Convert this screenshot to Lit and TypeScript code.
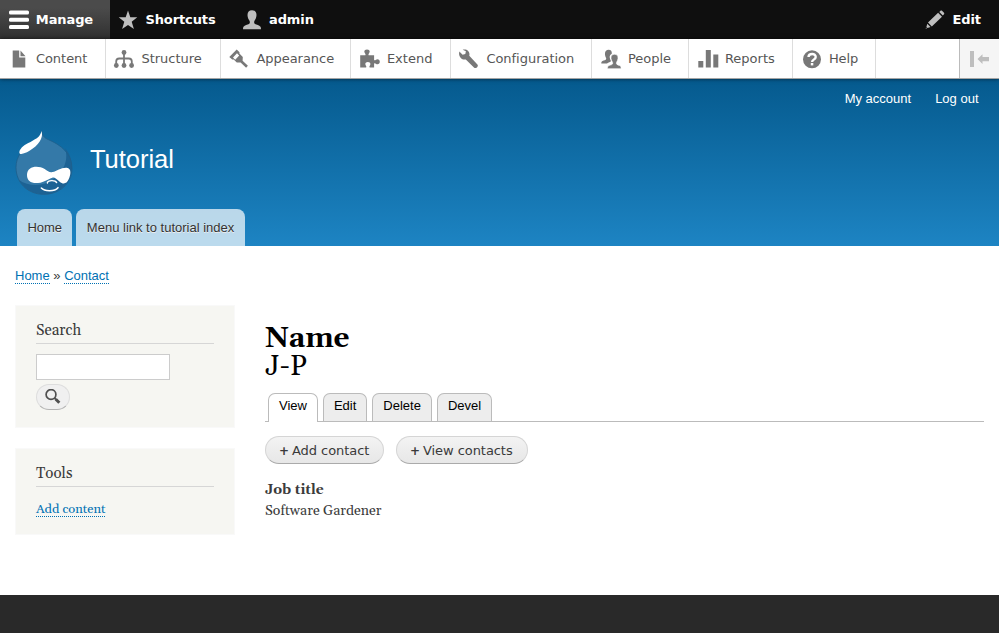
import { LitElement, html, css, svg } from "lit";
import { customElement } from "lit/decorators.js";

const icons: Record<string, unknown> = {
  menu: svg`<rect y="0.4" width="20" height="4.1" rx="1.5"/><rect y="7.7" width="20" height="4.1" rx="1.5"/><rect y="15" width="20" height="4.1" rx="1.5"/>`,
  star: svg`<path d="M10 .5l2.300 6.700h7l-5.600 4.500 2.200 7.200L10 14.900l-5.900 4 2.200-7.200L.7 7.200h7z"/>`,
  user: svg`<path d="M10 .2c3 0 4.500 2 4.500 4.800 0 2.200-.9 4.300-2 5.800-.6 1-.5 2.600.5 3.200 1.500.9 4.300 1.100 5.500 2.700.4.6.5 1.800.5 2.500H1c0-.7.100-1.900.5-2.500C2.700 15.100 5.500 14.900 7 14c1-.6 1.100-2.200.5-3.200-1.100-1.500-2-3.600-2-5.800C5.500 2.200 7 .2 10 .2z"/>`,
  pencil: svg`<path d="M13.100 2.800l3.900 3.900L6.800 16.500 3 12.600zM14.300 1.900l1.200-1.100c.5-.4 1-.4 1.500 0L19 2.800c.4.500.4 1 0 1.500l-1.200 1.200zM2.300 13.800l3.200 3.300-3 .9-1.100-1zM1 17.400l.9 1L.7 18.800z"/>`,
  content: svg`<path d="M3.700 1.500h6.500v7h6.100v10H3.700zM11.500 1.500l5 5.700h-5z"/>`,
  structure: svg`<g fill="none" stroke="#787878" stroke-width="1.8"><path d="M10 3v13M2.200 16v-3.500c0-2 1-3 3-3h9.600c2 0 3 1 3 3V16"/></g><circle cx="10" cy="3.500" r="2.400"/><circle cx="2.300" cy="16.500" r="2.400"/><circle cx="10" cy="16.500" r="2.400"/><circle cx="17.600" cy="16.500" r="2.400"/>`,
  appearance: svg`<path fill-rule="evenodd" d="M.3 8.100L7.700.5l2.800 2.700-.1 1.400 3.400 3.500-.2 3.700 5.300 4.900-1.800 2-5.500-5.300-3.800.2-3.100-3.100-1.500.1zM4 8.500l2.200 2.300 4-4.200L8 4.200z"/>`,
  extend: svg`<path d="M.2 6.200H5.400C6.200 5 4.200 4.200 4.300 2.600 4.400 1.200 5.400.5 7 .5s2.700.8 2.700 2.100C9.700 4.200 8 5 8.600 6.200h5.500v4.800c1 1 1.900-.8 3.400-.8 1.400 0 2.300 1 2.300 2.500s-.9 2.500-2.300 2.500c-1.500 0-2.500-1.700-3.400-.8v4H9.700c-1.100-1 .7-2.100.7-3.500 0-1.300-1-2-2.500-2s-2.600.8-2.600 2c0 1.500 1.800 2.500.8 3.500H.2z"/>`,
  config: svg`<path d="M.4 2.600l3.200 3.100 2.700-.6.600-2.800L3.700.8C5.500.1 7.700.4 9.100 1.900c1.300 1.300 1.700 3 1.200 4.800l8.100 8.700c1.600 1.700-1.500 4.800-3.200 3.300L6.800 10.400c-1.800.5-3.700 0-5-1.400C.2 7.400-.4 4.700.4 2.600z"/>`,
  people: svg`<path d="M7.500.7c2.500 0 3.500 1.600 3.300 4-1.500.8-2.200 2.100-2.100 3.600.1 1.500.8 2.800 1.300 3.800-.2 1.500-2.800 1.200-4 2.300H.3c0-1.300.2-2 1.200-2.500 1.500-.7 3.500-.6 3.700-2.200.1-1-.4-1.300-.8-2.300-.4-1-.6-2-.4-3.300.2-2 1.500-3.400 3.500-3.400z"/><path stroke="#fff" stroke-width=".6" d="M13.500 5.300c2.500 0 3.700 1.600 3.500 4-.1 1.700-.9 3-1.500 4.100-.7 2.200 1.500 2.500 3.200 3.100 1 .4 1.400 1.400 1.400 3.200H6.500c0-1.900.4-2.800 1.500-3.200 1.700-.6 4.400-.8 3.600-3-.5-1.200-1.500-2.400-1.600-4.200-.1-2.500 1-4 3.500-4z"/>`,
  reports: svg`<rect x=".3" y="12" width="5" height="6.500"/><rect x="7.800" y="1" width="5" height="17.500"/><rect x="15.300" y="5.500" width="5" height="13"/>`,
  help: svg`<circle cx="10" cy="10.300" r="9"/><path d="M6.500 8c.2-4 7.300-4 7.200-.1 0 2.700-3.600 2.700-3.600 5" fill="none" stroke="#fff" stroke-width="2.400"/><rect x="8.800" y="14" width="2.500" height="2.400" fill="#fff"/>`,
};
const icon = (name: string) => html`<svg class="icon" viewBox="0 0 20 20">${icons[name]}</svg>`;

const tray = [
  ["content", "Content"], ["structure", "Structure"], ["appearance", "Appearance"], ["extend", "Extend"],
  ["config", "Configuration"], ["people", "People"], ["reports", "Reports"], ["help", "Help"],
];

@customElement("app-root")
export class AppRoot extends LitElement {
  static styles = css`
    :host { display: flex; flex-direction: column; height: 633px; overflow: hidden; background: #fff; color: #3b3b3b;
      font-family: Georgia, Gelasio, "Liberation Serif", serif; }
    * { box-sizing: border-box; }
    h1, h2, p { margin: 0; font-weight: normal; }
    a { color: #0071b3; text-decoration: none; border-bottom: 1px dotted #0071b3; }
    .icon { width: 20px; height: 20px; flex: none; display: block; overflow: visible; }
    .bar { height: 39px; flex: none; background: #0f0f0f; display: flex; color: #fff; fill: #bebebe;
      font: bold 13px/39px "DejaVu Sans", sans-serif; }
    .item { display: flex; align-items: center; padding: 0 17.330px 0 8px; gap: 7.400px; white-space: nowrap; }
    .bar .item { letter-spacing: -.1px; padding-right: 18px; }
    .item.active { fill: #fff; width: 110px; padding-left: 9px; gap: 6.800px; background: linear-gradient(#4b4b4b 20%, #303030); }
    .item.edit { margin-left: auto; }
    .tray { height: 40px; flex: none; display: flex; fill: #787878; color: #565656; border-bottom: 1px solid #a4a4a4;
      font: 13px/39px "DejaVu Sans", sans-serif; position: relative; box-shadow: 0 0 4px rgba(0,0,0,.6); background: #fff; }
    .tray .item { border-right: 1px solid #ddd; padding-right: 0; }
    .tray .item:nth-child(1) { width: 106px; padding-left: 8.500px; letter-spacing: -.03px; }
    .tray .item:nth-child(2) { width: 115px; }
    .tray .item:nth-child(3) { width: 130px; letter-spacing: -.03px; }
    .tray .item:nth-child(4) { width: 100px; padding-left: 8.500px; }
    .tray .item:nth-child(5) { width: 141px; letter-spacing: -.03px; }
    .tray .item:nth-child(6) { width: 97px; padding-left: 8.500px; }
    .tray .item:nth-child(7) { width: 104px; padding-left: 8.500px; }
    .tray .item:nth-child(8) { width: 83px; padding-left: 8.500px; letter-spacing: -.1px; }
    .toggle { margin-left: auto; width: 40px; border-left: 1px solid #bbb; background: #f5f5f5; display: flex; align-items: center; padding-left: 10px; }
    .header { height: 167px; flex: none; background: linear-gradient(#055a8e, #1d84c3); display: flex; flex-direction: column;
      color: #fff; font-family: "Liberation Sans", sans-serif; }
    .account { display: flex; justify-content: flex-end; gap: 24px; padding: 10px 20.500px 0 0; height: 46px; font-size: 13px; line-height: 19px; }
    .brand { display: flex; height: 75px; padding-left: 10px; }
    .logo { width: 70px; height: 75px; }
    .title { font-size: 25.600px; line-height: 30px; padding: 19px 0 0 10px; letter-spacing: -.08px; }
    .menu { display: flex; gap: 4px; padding-left: 17px; margin-top: auto; font-size: 13px; line-height: 37px; color: #333; }
    .menu span { height: 37px; padding: 0 10.400px; background: rgba(255,255,255,.7); border-radius: 8px 8px 0 0; text-shadow: 0 1px #eee; }
    .crumbs { height: 59px; padding: 20px 15px 0; font: 13px/19px "Liberation Sans", sans-serif; flex: none; }
    .crumbs a { display: inline-block; line-height: 15px; }
    .columns { display: flex; gap: 30px; padding: 0 15px; flex: 1; }
    .side { width: 220px; display: flex; flex-direction: column; gap: 20px; }
    .block { background: #f6f6f2; border: 1px solid #f9f9f9; padding: 14px 20px 0; }
    .search { height: 123px; }
    .tools { height: 87px; }
    .block h2 { font-size: 15.100px; line-height: 22px; height: 24px; border-bottom: 1px solid #d6d6d6; }
    .field { width: 134px; height: 26px; margin-top: 10px; background: #fff; border: 1px solid #ccc; }
    .go { width: 34px; height: 26px; margin-top: 4px; background: #f0f0f0; border: 1px solid #ddd; border-bottom-color: #b4b4b4;
      border-radius: 13px; display: flex; align-items: center; justify-content: center; }
    .go svg { width: 16px; height: 16px; }
    .tools p { font-size: 12.850px; line-height: 16px; margin-top: 14px; }
    .tools a { display: inline-block; line-height: 13px; }
    .main { flex: 1; padding-top: 20px; }
    h1 { font-size: 28px; line-height: 28px; height: 56px; color: #000; }
    h1 b { display: block; }
    .tabs { display: flex; gap: 5px; padding-left: 3px; margin-top: 12px; height: 29px; border-bottom: 1px solid #bbb; color: #000;
      font: 13px/23px "Liberation Sans", sans-serif; }
    .tabs span { height: 28px; padding: 0 10px; background: #ededed; border: 1px solid #bbb; border-bottom: 0; border-radius: 7px 7px 0 0; }
    .tabs .on { background: #fff; height: 29px; }
    .actions { display: flex; gap: 12px; margin-top: 14px; font: 13px/28px "DejaVu Sans", sans-serif; color: #3a3a3a; }
    .actions span { height: 28px; padding: 0 13px; background: linear-gradient(#f3f3f3, #e7e7e7); border: 1px solid #d5d5d5;
      border-bottom-color: #aaa; border-radius: 14px; display: flex; gap: 3px; letter-spacing: -.06px; }
    .actions span:first-child { width: 119px; }
    .actions span:last-child { width: 132px; }
    .actions b { font-size: 12px; font-weight: bold; }
    .label { font-size: 14px; line-height: 20px; font-weight: bold; margin-top: 16px; }
    .value { font-size: 14px; line-height: 22px; }
    .footer { height: 38px; flex: none; background: #292929; }
  `;

  render() {
    return html`
      <nav class="bar">
        <div class="item active">${icon("menu")}<span>Manage</span></div>
        <div class="item">${icon("star")}<span>Shortcuts</span></div>
        <div class="item">${icon("user")}<span>admin</span></div>
        <div class="item edit">${icon("pencil")}<span>Edit</span></div>
      </nav>
      <nav class="tray">
        ${tray.map(([i, t]) => html`<div class="item">${icon(i)}<span>${t}</span></div>`)}
        <div class="toggle"><svg width="20" height="16" viewBox="0 0 20 16" fill="#bebebe"><path d="M0 0h4v16H0zM7.500 8l5-4.800V6h6.500v4.200h-6.500v2.700z"/></svg></div>
      </nav>
      <header class="header">
        <div class="account"><span>My account</span><span>Log out</span></div>
        <div class="brand">
          <svg class="logo" viewBox="0 0 210 225">
            <path fill="#3479a8" d="M95 18C97 36 106 40 122 47C150 60 186 84 186 130C186 176 148 208 101 208C54 208 18 174 18 127C18 95 38 69 66 53C83 43 93 35 95 18Z"/>
            <path fill="#1c6294" d="M165 69C180 86 186 106 186 128C186 174 148 208 101 208C70 208 42 192 27 165C53 183 90 186 121 169C157 147 178 110 165 69Z"/>
            <path fill="none" stroke="#1e5f8c" stroke-width="2.500" d="M95 18C97 36 106 40 122 47C150 60 186 84 186 130C186 176 148 208 101 208C54 208 18 174 18 127C18 95 38 69 66 53"/>
            <path fill="#fff" d="M94 18C97 26 97 32 93 42C85 62 55 84 34 87C26 88 27 78 32 72C40 60 58 54 70 46C84 38 92 32 94 18Z"/>
            <path fill="#fff" d="M51 150C51 122 85 120 104 132C113 138 120 144 127 141C142 138 152 127 170 128C186 130 182 150 176 163C170 178 158 178 149 170C139 162 134 156 127 158C115 161 104 172 84 174C64 176 51 168 51 150Z"/>
            <g fill="none" stroke="#fff" stroke-linecap="round"><path stroke-width="4" d="M112 174C114 165 136 165 140 173"/><path stroke-width="4.500" d="M94 189C104 200 134 200 144 188"/></g>
          </svg>
          <div class="title">Tutorial</div>
        </div>
        <nav class="menu"><span>Home</span><span>Menu link to tutorial index</span></nav>
      </header>
      <div class="crumbs"><a>Home</a> » <a>Contact</a></div>
      <div class="columns">
        <aside class="side">
          <section class="block search"><h2>Search</h2><div class="field"></div>
            <div class="go"><svg viewBox="0 0 16 16" fill="none" stroke="#505050"><circle cx="6" cy="5.500" r="4.900" stroke-width="1.700"/><path d="M9.500 9l1.500 1.500" stroke-width="1.800"/><path d="M10.800 10.300l3.500 3.500" stroke-width="3"/></svg></div>
          </section>
          <section class="block tools"><h2>Tools</h2><p><a>Add content</a></p></section>
        </aside>
        <main class="main">
          <h1><b>Name</b>J-P</h1>
          <nav class="tabs"><span class="on">View</span><span>Edit</span><span>Delete</span><span>Devel</span></nav>
          <div class="actions"><span><b>+</b>Add contact</span><span><b>+</b>View contacts</span></div>
          <p class="label">Job title</p>
          <p class="value">Software Gardener</p>
        </main>
      </div>
      <footer class="footer"></footer>
    `;
  }
}
